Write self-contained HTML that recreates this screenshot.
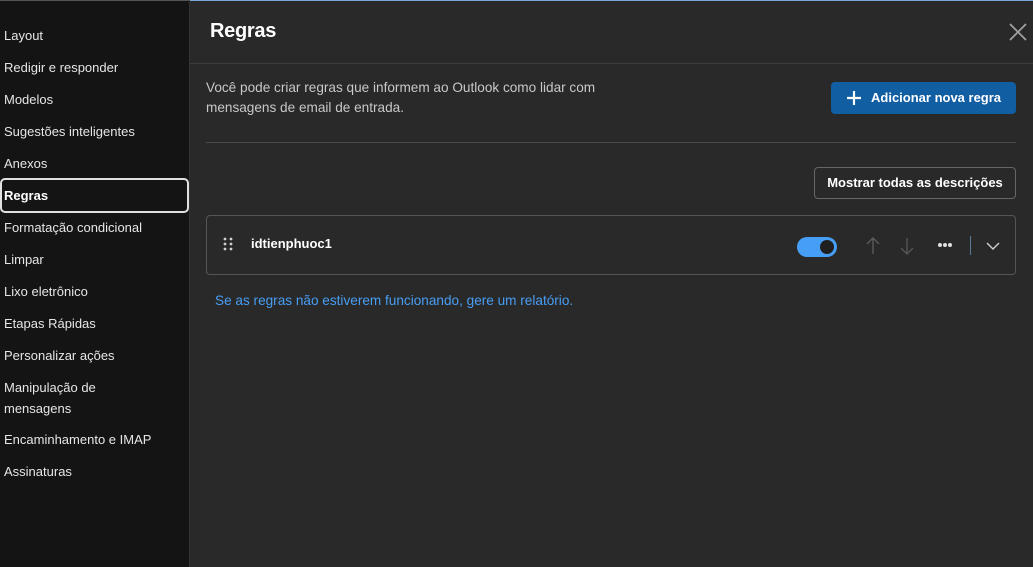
<!DOCTYPE html>
<html><head><meta charset="utf-8"><style>
*{margin:0;padding:0;box-sizing:border-box}
body{width:1033px;height:567px;overflow:hidden;background:#292929;font-family:"Segoe UI","Liberation Sans",sans-serif;color:#fff;position:relative}
.side{position:absolute;left:0;top:0;width:190px;height:567px;background:#141414;border-right:1px solid #333;border-top:1px solid #555}
.side div{position:absolute;left:4px;font-size:13px;color:#e6e6e6;line-height:21px}
.sel{left:0!important;width:189px;height:35px;border:2px solid #e0e0e0;border-radius:5px;padding:7px 2px;font-weight:bold;color:#fff!important}
.topline{position:absolute;left:190px;top:0;right:0;height:1px;background:#7aa7d8}
.hdr{position:absolute;left:190px;right:0;top:63px;height:1px;background:#3d3d3d}
.t{position:absolute;font-size:13px}
</style></head><body>
<div class="side">
<div style="top:24px">Layout</div>
<div style="top:56px">Redigir e responder</div>
<div style="top:88px">Modelos</div>
<div style="top:120px">Sugestões inteligentes</div>
<div style="top:152px">Anexos</div>
<div class="sel" style="top:177px;line-height:17px">Regras</div>
<div style="top:216px">Formatação condicional</div>
<div style="top:248px">Limpar</div>
<div style="top:280px">Lixo eletrônico</div>
<div style="top:312px">Etapas Rápidas</div>
<div style="top:344px">Personalizar ações</div>
<div style="top:376px">Manipulação de<br>mensagens</div>
<div style="top:428px">Encaminhamento e IMAP</div>
<div style="top:460px">Assinaturas</div>
</div>
<div class="topline"></div>
<div class="hdr"></div>
<div class="t" style="left:210px;top:20px;font-size:20px;font-weight:bold;letter-spacing:-0.3px">Regras</div>
<svg style="position:absolute;left:1009px;top:23px" width="18" height="18"><path d="M1 1L17 17M17 1L1 17" stroke="#a0a0a0" stroke-width="1.8"/></svg>
<div class="t" style="left:206px;top:78px;color:#c8c8c8;line-height:20px;font-size:13.6px">Você pode criar regras que informem ao Outlook como lidar com<br>mensagens de email de entrada.</div>
<div style="position:absolute;left:831px;top:82px;width:185px;height:32px;background:#115ea3;border-radius:4px;font-size:13px;font-weight:bold;line-height:32px;padding-left:40px">Adicionar nova regra</div>
<svg style="position:absolute;left:846px;top:90px" width="16" height="16"><path d="M8 1V15M1 8H15" stroke="#fff" stroke-width="2.2"/></svg>
<div style="position:absolute;left:206px;top:142px;width:810px;height:1px;background:#4a4a4a"></div>
<div style="position:absolute;left:814px;top:167px;width:202px;height:32px;border:1px solid #666;border-radius:4px;font-size:13px;font-weight:bold;text-align:center;line-height:30px">Mostrar todas as descrições</div>
<div style="position:absolute;left:206px;top:215px;width:810px;height:60px;border:1px solid #555;border-radius:4px"></div>
<svg style="position:absolute;left:222px;top:237px" width="12" height="14" fill="#d0d0d0"><circle cx="3" cy="2" r="1.4"/><circle cx="9" cy="2" r="1.4"/><circle cx="3" cy="7" r="1.4"/><circle cx="9" cy="7" r="1.4"/><circle cx="3" cy="12" r="1.4"/><circle cx="9" cy="12" r="1.4"/></svg>
<div class="t" style="left:251px;top:236px;font-weight:bold">idtienphuoc1</div>
<div style="position:absolute;left:797px;top:237px;width:40px;height:20px;border-radius:10px;background:#479ef5"></div>
<div style="position:absolute;left:820px;top:240px;width:14px;height:14px;border-radius:7px;background:#1f1f1f"></div>
<svg style="position:absolute;left:864px;top:236px" width="60" height="20" fill="none" stroke="#5a5a5a" stroke-width="1.4"><path d="M9 2V18M3 8L9 2L15 8"/><path d="M43 2V18M37 12L43 18L49 12" stroke="#555"/></svg>
<svg style="position:absolute;left:937px;top:242px" width="16" height="6" fill="#e0e0e0"><circle cx="3" cy="3" r="2"/><circle cx="8" cy="3" r="2"/><circle cx="13" cy="3" r="2"/></svg>
<div style="position:absolute;left:970px;top:236px;width:1px;height:19px;background:#5a7a9a"></div>
<svg style="position:absolute;left:986px;top:241px" width="14" height="10" fill="none" stroke="#d0d0d0" stroke-width="1.4"><path d="M1 2L7 8L13 2"/></svg>
<div class="t" style="left:215px;top:293px;color:#479ef5;font-size:13.6px">Se as regras não estiverem funcionando, gere um relatório.</div>
</body></html>
